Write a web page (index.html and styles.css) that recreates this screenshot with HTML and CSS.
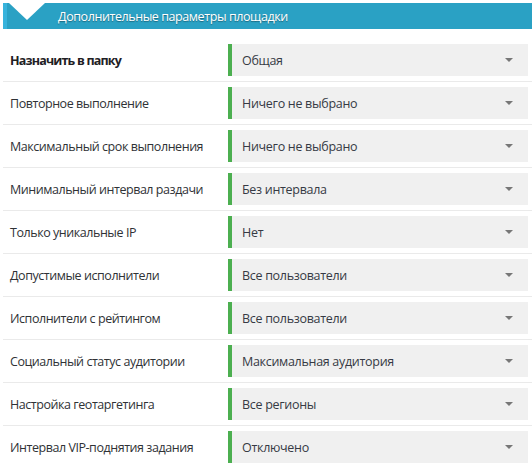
FILE: index.html
```html
<!DOCTYPE html>
<html lang="ru">
<head>
<meta charset="utf-8">
<title>Дополнительные параметры площадки</title>
<link rel="stylesheet" href="styles.css">
</head>
<body>
<div class="panel">
  <div class="head">
    <span class="head-strip"></span>
    <svg class="head-v" width="36" height="17" viewBox="0 0 36 17"><polygon points="0,0 36,0 18,17" fill="#ffffff"/></svg>
    <span class="head-title">Дополнительные параметры площадки</span>
  </div>
  <div class="list">
    <div class="row"><div class="label bold">Назначить в папку</div><div class="select"><span>Общая</span><i class="caret"></i></div></div>
    <div class="row"><div class="label">Повторное выполнение</div><div class="select"><span>Ничего не выбрано</span><i class="caret"></i></div></div>
    <div class="row"><div class="label">Максимальный срок выполнения</div><div class="select"><span>Ничего не выбрано</span><i class="caret"></i></div></div>
    <div class="row"><div class="label">Минимальный интервал раздачи</div><div class="select"><span>Без интервала</span><i class="caret"></i></div></div>
    <div class="row"><div class="label">Только уникальные IP</div><div class="select"><span>Нет</span><i class="caret"></i></div></div>
    <div class="row"><div class="label">Допустимые исполнители</div><div class="select"><span>Все пользователи</span><i class="caret"></i></div></div>
    <div class="row"><div class="label">Исполнители с рейтингом</div><div class="select"><span>Все пользователи</span><i class="caret"></i></div></div>
    <div class="row"><div class="label">Социальный статус аудитории</div><div class="select"><span>Максимальная аудитория</span><i class="caret"></i></div></div>
    <div class="row"><div class="label">Настройка геотаргетинга</div><div class="select"><span>Все регионы</span><i class="caret"></i></div></div>
    <div class="row"><div class="label">Интервал VIP-поднятия задания</div><div class="select"><span>Отключено</span><i class="caret"></i></div></div>
  </div>
</div>
</body>
</html>
```
FILE: styles.css
```css
html, body {
  margin: 0;
  padding: 0;
  background: #ffffff;
}
body {
  font-family: "Open Sans", "DejaVu Sans", sans-serif;
  font-size: 12.5px;
  letter-spacing: -0.3px;
  color: #333333;
}
.panel {
  padding: 3px 0 0 3px;
}
.head {
  position: relative;
  display: flex;
  align-items: center;
  height: 26px;
  background: #2aa1c4;
}
.head-strip {
  align-self: stretch;
  width: 4px;
  background: #37b3dc;
}
.head-v {
  position: absolute;
  left: 6px;
  top: 0;
}
.head-title {
  margin-left: 51px;
  color: #ffffff;
  letter-spacing: -0.42px;
  text-shadow: 0 1px 1px rgba(0, 0, 0, 0.35);
}
.list {
  padding-top: 10px;
}
.row {
  display: flex;
  align-items: center;
  padding: 5px 4px 5px 7px;
  border-bottom: 1px solid #eaeaea;
}
.row:last-child {
  border-bottom: none;
}
.label {
  flex: 1;
  color: #2f3236;
  letter-spacing: -0.45px;
}
.label.bold {
  font-size: 12.5px;
  font-weight: 700;
  letter-spacing: -0.8px;
  color: #1e2024;
}
.select {
  display: flex;
  align-items: center;
  justify-content: space-between;
  box-sizing: border-box;
  width: 300px;
  height: 32px;
  padding: 0 15px 0 10px;
  background: #f0f0f0;
  border-left: 4px solid #4caf50;
  color: #363a44;
}
.caret {
  width: 0;
  height: 0;
  border-left: 4px solid transparent;
  border-right: 4px solid transparent;
  border-top: 4px solid #777777;
}
```
